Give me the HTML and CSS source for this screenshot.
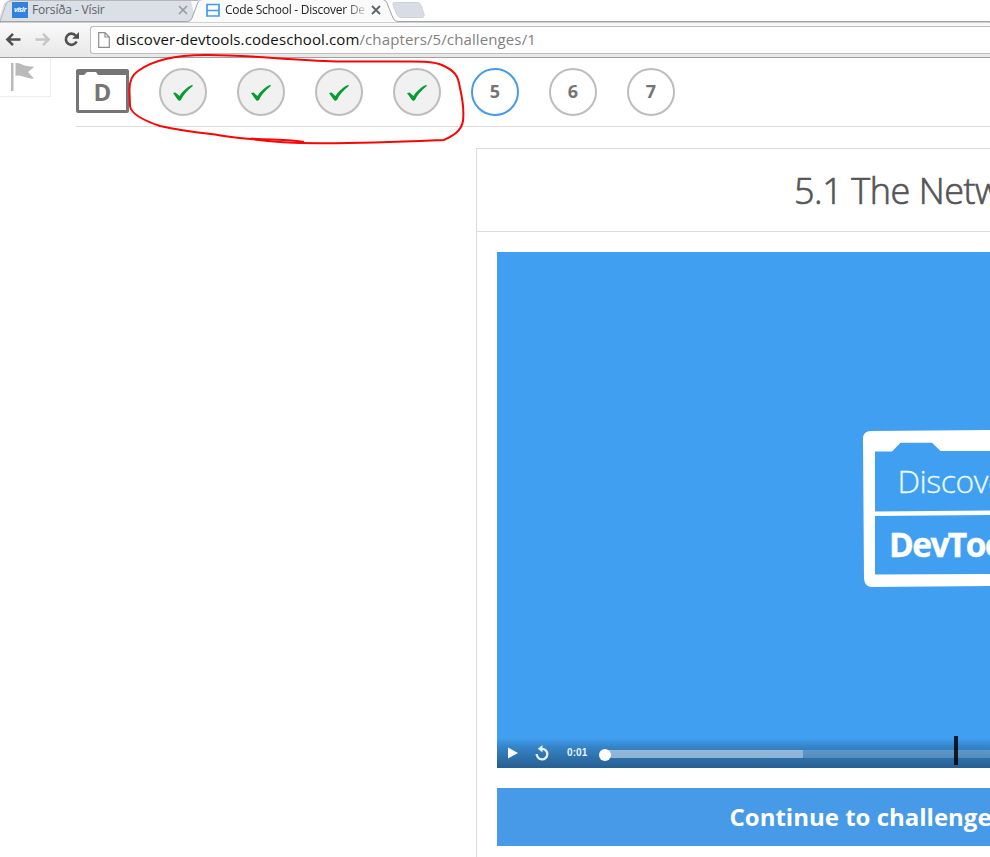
FILE: index.html
```
<!DOCTYPE html>
<html lang="en">
<head>
<meta charset="utf-8">
<title>Code School - Discover De</title>
<link rel="stylesheet" href="styles.css">
</head>
<body>
<header class="browser">
  <div class="tabs">
    <svg class="tab-shapes" width="990" height="23" viewBox="0 0 990 23">
      <path d="M-2 22 L4 4 Q6 .5 10 .5 H191 L196 22 Z" fill="#dbdfe6"/>
      <path d="M0 21.500 L6 4 Q8 0 12 .5 H198" fill="none" stroke="#b4b6ba"/>
      <path d="M0 21.500 H188 Q191 21 192 18 L198 2 Q199 -.5 202 -.5 H383 Q386 0 387 3 L393 18 Q394.500 21.500 398 21.500 H990 V23 H0Z" fill="#fafafa" stroke="#a2a4a7"/>
      <path d="M393 5 Q392 2.500 395 2.500 H417 Q420 2.500 421 5 L424 14 Q425 17.500 421 17.500 H401 Q398 17.500 397 15Z" fill="#d8dde5" stroke="#ced2d8"/>
    </svg>
    <div class="tab tab-back"><span class="visir">vísir</span><span class="tab-title">Forsíða - Vísir</span>
      <svg class="close" width="10" height="10" viewBox="0 0 10 10"><path d="M1 1L9 9M9 1L1 9" stroke="#96999d" stroke-width="1.600"/></svg></div>
    <div class="tab tab-front">
      <svg class="fav" width="14" height="14" viewBox="0 0 14 14"><path d="M1 1.500H13V13H1ZM1 7.500H13" fill="none" stroke="#459be9" stroke-width="1.700"/></svg>
      <span class="tab-title fade">Code School - Discover De</span>
      <svg class="close" width="10" height="10" viewBox="0 0 10 10"><path d="M1 1L9 9M9 1L1 9" stroke="#606366" stroke-width="1.800"/></svg></div>
  </div>
  <div class="toolbar">
    <svg class="nav-icons" width="90" height="34" viewBox="0 23 90 34">
      <path d="M20.500 39.500H8M13 33.800L7.300 39.500L13 45.200" fill="none" stroke="#505050" stroke-width="2.500"/>
      <path d="M35.500 39.500H48M43 33.800L48.700 39.500L43 45.200" fill="none" stroke="#c6c6c6" stroke-width="2.500"/>
      <path d="M75.800 35.700A5.600 5.600 0 1 0 76.600 41.500" fill="none" stroke="#505050" stroke-width="2.600"/>
      <path d="M79 32V38.800H72.200Z" fill="#505050"/>
    </svg>
    <div class="address">
      <svg width="12" height="16" viewBox="0 0 12 16"><path d="M.7 .7H7L11.300 5V15.300H.7ZM7 .7V5H11.300" fill="#fff" stroke="#8d8d8d" stroke-width="1.200"/></svg>
      <span class="url">discover-devtools.codeschool.com<span class="path">/chapters/5/challenges/1</span></span>
    </div>
  </div>
</header>
<div class="page">
  <div class="flag"><svg width="26" height="29" viewBox="0 0 26 29"><path d="M0 0H2.500V28H0ZM4.500 0C10 -.5 12 4 23.500 3.500L17 9L23 15.500C14 16 11 11 4.500 13Z" fill="#bababa"/></svg></div>
  <nav class="steps">
    <div class="badge">
      <svg width="53" height="44" viewBox="0 0 53 44"><path fill-rule="evenodd" d="M2 0H51Q53 0 53 2V42Q53 44 51 44H2Q0 44 0 42V2Q0 0 2 0ZM3 6V41H50V6H22L20 3H11L8 6Z" fill="#757575"/></svg>
      <b>D</b>
    </div>
    <ol class="list">
      <li class="done"><svg width="22" height="18" viewBox="0 0 22 18"><path d="M1 9L3.500 8.500L7.500 12C10 8 15 3 20.300 .8L20.800 2C15 6.500 11 11.500 9 16L7 17L5.200 15Z" fill="#089b2d"/></svg></li>
      <li class="done"><svg width="22" height="18" viewBox="0 0 22 18"><path d="M1 9L3.500 8.500L7.500 12C10 8 15 3 20.300 .8L20.800 2C15 6.500 11 11.500 9 16L7 17L5.200 15Z" fill="#089b2d"/></svg></li>
      <li class="done"><svg width="22" height="18" viewBox="0 0 22 18"><path d="M1 9L3.500 8.500L7.500 12C10 8 15 3 20.300 .8L20.800 2C15 6.500 11 11.500 9 16L7 17L5.200 15Z" fill="#089b2d"/></svg></li>
      <li class="done"><svg width="22" height="18" viewBox="0 0 22 18"><path d="M1 9L3.500 8.500L7.500 12C10 8 15 3 20.300 .8L20.800 2C15 6.500 11 11.500 9 16L7 17L5.200 15Z" fill="#089b2d"/></svg></li>
      <li class="current">5</li>
      <li>6</li>
      <li>7</li>
    </ol>
  </nav>
</div>
<main class="lesson">
  <h1>5.1 The Netw</h1>
  <div class="lesson-body">
    <div class="video">
      <svg class="logo" width="130" height="157" viewBox="863 430 130 157">
        <path fill-rule="evenodd" fill="#fff" d="M871 431L995 430V586L872 587Q865 587 864 579L863 439Q863 431 871 431ZM875 451.500V511.500L995 510.500V451H940.500L932 442.800H900.500L892 451.500ZM875 516V574.500L995 574V515Z"/>
        <text x="897.500" y="493.300" class="logo-light">Discove</text>
        <text x="889" y="557" class="logo-bold">DevToo</text>
      </svg>
      <div class="controls">
        <svg class="play" width="10" height="12" viewBox="0 0 10 12"><path d="M0 0.500L10 6L0 11.500Z" fill="#fff"/></svg>
        <svg class="replay" width="14" height="16" viewBox="0 0 14 16"><path d="M7 3.800A5.300 5.300 0 1 1 1.700 9" fill="none" stroke="#e9f2fb" stroke-width="2.300"/><path d="M7.500 0V7.500L2.800 3.800Z" fill="#e9f2fb"/></svg>
        <span class="time">0:01</span>
        <div class="track"><div class="loaded"></div><i class="knob"></i><i class="marker"></i></div>
      </div>
    </div>
    <a class="continue">Continue to challenge</a>
  </div>
</main>
<svg class="scribble" width="345" height="94" viewBox="125 52 345 94">
  <path d="M129.500 92C129 82 132 75 138 71C153 60 176 55 205 55C245 54.500 285 60 337 61.500H405C420 61.500 433 61 442 65C455 71 458 75 460 88C463 101 464 112 463 121C461 132 452 136 444 140C410 141.500 370 143.500 318 143.300C290 143 272 142 251 139C235 138 225 136 211 134C193 132 173 129 160 126C145 121 131 114 130 106Z" fill="none" stroke="#fa0505" stroke-width="2"/>
  <path d="M251 138.500C270 140 290 139 304 142" fill="none" stroke="#fa0505" stroke-width="2"/>
</svg>
</body>
</html>
```
FILE: styles.css
```
* { box-sizing: border-box; }
body { margin: 0; width: 990px; height: 857px; overflow: hidden; position: relative; background: #fff; font-family: "Open Sans", sans-serif; }
svg { display: block; flex: none; }
.browser { height: 58px; background: #fafafa; border-bottom: 1px solid #a0a0a0; }
.tabs { position: relative; height: 23px; display: flex; background: #fff; }
.tab-shapes { position: absolute; left: 0; top: 0; }
.tab { position: relative; display: flex; align-items: center; height: 20px; font-size: 12px; white-space: nowrap; }
.tab-back { width: 200px; padding-left: 12px; color: #606266; }
.tab-front { padding-left: 6px; color: #222; }
.tab-title { line-height: 18px; }
.visir { width: 16px; height: 16px; background: #3383dc; color: #fff; font: italic bold 7px/16px "Open Sans", sans-serif; text-align: center; margin-right: 4px; letter-spacing: -.4px; }
.tab-back .tab-title { width: 146px; letter-spacing: -.15px; }
.fav { margin-right: 5px; }
.fade { width: 141px; overflow: hidden; letter-spacing: -.24px; -webkit-mask-image: linear-gradient(90deg, #000 120px, transparent 144px); mask-image: linear-gradient(90deg, #000 120px, transparent 144px); }
.tab-front .close { margin-left: 5px; }
.toolbar { height: 34px; display: flex; background: linear-gradient(#fafafa, #e8e8e8); }
.address { flex: 1; height: 28px; margin-top: 3px; border: 1px solid #bdbdbd; border-right: 0; border-radius: 3px 0 0 3px; background: #fff; display: flex; align-items: center; padding-left: 7px; gap: 6px; }
.url { font-size: 15px; line-height: 24px; padding-bottom: 2px; letter-spacing: .115px; color: #111; white-space: nowrap; }
.path { color: #808080; }
.page { display: flex; height: 90px; }
.flag { width: 51px; height: 39px; border: 1px solid #eee; border-width: 0 1px 1px 0; padding: 5px 0 0 11px; }
.steps { flex: 1; height: 69px; margin-left: 25px; border-bottom: 1px solid #dcdcdc; display: flex; }
.badge { position: relative; width: 53px; height: 44px; margin-top: 11px; }
.badge b { position: absolute; inset: 4px 0 0 0; text-align: center; font-size: 24px; line-height: 38px; color: #757575; }
.list { display: flex; gap: 30px; list-style: none; padding: 0; margin: 10px 0 0 30px; }
.list li { width: 48px; height: 48px; border: 2px solid #bdbdbd; border-radius: 50%; display: flex; align-items: center; justify-content: center; padding-bottom: 2px; font-size: 18px; font-weight: 700; color: #757575; }
.list .done { background: #f1f1f1; padding: 2px 0 0; }
.list .current { border-color: #459be9; }
.lesson { margin-left: 476px; height: 709px; border: 1px solid #dcdcdc; border-width: 1px 0 0 1px; }
.lesson h1 { margin: 0; height: 83px; padding-left: 317px; border-bottom: 1px solid #dcdcdc; font-size: 36px; line-height: 84px; font-weight: 300; letter-spacing: -.45px; color: #555; white-space: nowrap; overflow: hidden; -webkit-text-stroke: .7px #555; }
.lesson-body { padding: 20px 0 0 20px; }
.video { height: 516px; background: #409ff1; overflow: hidden; display: flex; flex-direction: column; justify-content: space-between; padding-top: 178px; }
.logo { margin-left: 366px; }
.logo-light { font: 300 32px "Open Sans", sans-serif; fill: #e9fbff; stroke: #e9fbff; stroke-width: .3px; letter-spacing: -.5px; }
.logo-bold { font: 700 33.5px "Open Sans", sans-serif; fill: #fff; stroke: #fff; stroke-width: .4px; letter-spacing: -1.6px; }
.controls { height: 30px; display: flex; align-items: center; padding-left: 11px; background: linear-gradient(#409ff1 0, #3583c6 30%, #265f91 100%); }
.replay { margin-left: 17px; }
.time { width: 38px; margin-left: 18px; font: bold 10px/28px "Liberation Sans", sans-serif; letter-spacing: .1px; color: #e9f2fb; }
.track { position: relative; flex: 1; height: 8px; margin-top: 2px; background: rgba(255,255,255,.2); }
.loaded { width: 198px; height: 8px; background: rgba(255,255,255,.33); }
.knob { position: absolute; left: -6px; top: -1px; width: 12px; height: 12px; border-radius: 50%; background: #fff; }
.marker { position: absolute; left: 349px; top: -14px; width: 4px; height: 29px; background: rgba(0,0,0,.82); }
.continue { display: block; height: 58px; margin-top: 20px; padding-left: 232.5px; background: #469ae8; color: #fff; font-size: 24px; line-height: 58px; font-weight: 700; white-space: nowrap; overflow: hidden; }
.scribble { position: absolute; left: 125px; top: 52px; }
```
